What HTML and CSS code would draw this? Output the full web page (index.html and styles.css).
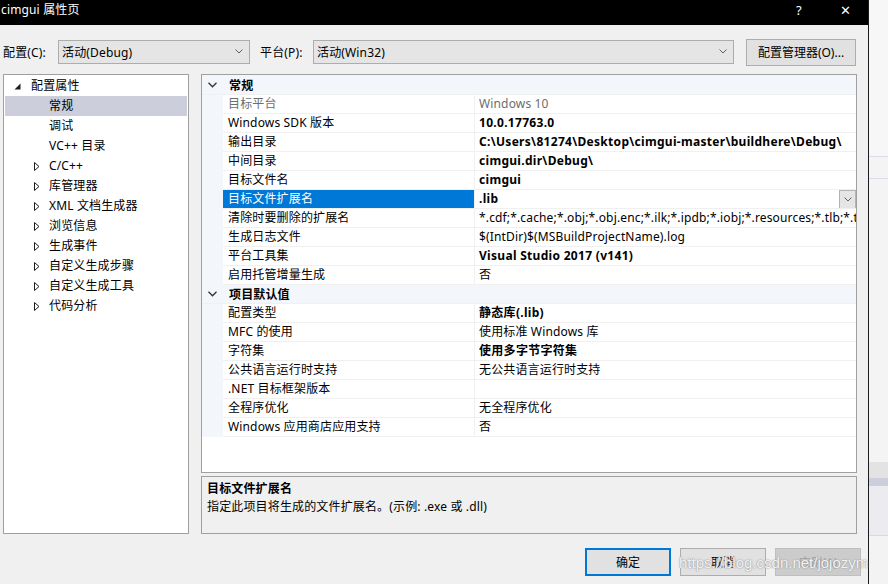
FILE: index.html
```html
<!DOCTYPE html>
<html lang="zh-CN">
<head>
<meta charset="UTF-8" />
<title>cimgui 属性页</title>
<link rel="stylesheet" href="styles.css">
</head>
<body>
<div class="dialog">
  <div class="titlebar">
    <span class="title">cimgui 属性页</span>
    <span class="help">?</span>
    <span class="close">✕</span>
  </div>

  <div class="toolbar">
    <span class="label">配置(C):</span>
    <div class="combo combo-config">
      <span>活动(Debug)</span>
      <svg class="chev" width="8" height="5" viewBox="0 0 8 5"><path d="M0.5 0.5 L4 4 L7.5 0.5" fill="none" stroke="#606060" stroke-width="1"/></svg>
    </div>
    <span class="label label-platform">平台(P):</span>
    <div class="combo combo-platform">
      <span>活动(Win32)</span>
      <svg class="chev" width="8" height="5" viewBox="0 0 8 5"><path d="M0.5 0.5 L4 4 L7.5 0.5" fill="none" stroke="#606060" stroke-width="1"/></svg>
    </div>
    <button class="btn btn-manager">配置管理器(O)...</button>
  </div>

  <div class="main">
    <div class="tree">
      <div class="node root">
        <svg class="twisty" width="7" height="7" viewBox="0 0 7 7"><path d="M6.5 0.5 L6.5 6.5 L0.5 6.5 Z" fill="#1e1e1e"/></svg>
        <span>配置属性</span>
      </div>
      <div class="node leaf selected"><span>常规</span></div>
      <div class="node leaf"><span>调试</span></div>
      <div class="node leaf"><span>VC++ 目录</span></div>
      <div class="node branch"><svg class="twisty" width="6" height="9" viewBox="0 0 6 9"><path d="M0.5 0.5 L5 4.5 L0.5 8.5 Z" fill="none" stroke="#1e1e1e"/></svg><span>C/C++</span></div>
      <div class="node branch"><svg class="twisty" width="6" height="9" viewBox="0 0 6 9"><path d="M0.5 0.5 L5 4.5 L0.5 8.5 Z" fill="none" stroke="#1e1e1e"/></svg><span>库管理器</span></div>
      <div class="node branch"><svg class="twisty" width="6" height="9" viewBox="0 0 6 9"><path d="M0.5 0.5 L5 4.5 L0.5 8.5 Z" fill="none" stroke="#1e1e1e"/></svg><span>XML 文档生成器</span></div>
      <div class="node branch"><svg class="twisty" width="6" height="9" viewBox="0 0 6 9"><path d="M0.5 0.5 L5 4.5 L0.5 8.5 Z" fill="none" stroke="#1e1e1e"/></svg><span>浏览信息</span></div>
      <div class="node branch"><svg class="twisty" width="6" height="9" viewBox="0 0 6 9"><path d="M0.5 0.5 L5 4.5 L0.5 8.5 Z" fill="none" stroke="#1e1e1e"/></svg><span>生成事件</span></div>
      <div class="node branch"><svg class="twisty" width="6" height="9" viewBox="0 0 6 9"><path d="M0.5 0.5 L5 4.5 L0.5 8.5 Z" fill="none" stroke="#1e1e1e"/></svg><span>自定义生成步骤</span></div>
      <div class="node branch"><svg class="twisty" width="6" height="9" viewBox="0 0 6 9"><path d="M0.5 0.5 L5 4.5 L0.5 8.5 Z" fill="none" stroke="#1e1e1e"/></svg><span>自定义生成工具</span></div>
      <div class="node branch"><svg class="twisty" width="6" height="9" viewBox="0 0 6 9"><path d="M0.5 0.5 L5 4.5 L0.5 8.5 Z" fill="none" stroke="#1e1e1e"/></svg><span>代码分析</span></div>
    </div>

    <div class="side">
      <div class="grid">
        <div class="cat first">
          <svg class="cat-chev" width="9" height="6" viewBox="0 0 9 6"><path d="M0.5 0.8 L4.5 4.8 L8.5 0.8" fill="none" stroke="#333" stroke-width="1.3"/></svg>
          <span>常规</span>
        </div>
        <div class="row dim"><div class="gut"></div><div class="name">目标平台</div><div class="val">Windows 10</div></div>
        <div class="row"><div class="gut"></div><div class="name">Windows SDK 版本</div><div class="val b">10.0.17763.0</div></div>
        <div class="row"><div class="gut"></div><div class="name">输出目录</div><div class="val b">C:\Users\81274\Desktop\cimgui-master\buildhere\Debug\</div></div>
        <div class="row"><div class="gut"></div><div class="name">中间目录</div><div class="val b">cimgui.dir\Debug\</div></div>
        <div class="row"><div class="gut"></div><div class="name">目标文件名</div><div class="val b">cimgui</div></div>
        <div class="row active"><div class="gut"></div><div class="name">目标文件扩展名</div><div class="val b"><span class="txt">.lib</span><span class="drop"><svg width="8" height="5" viewBox="0 0 8 5"><path d="M0.5 0.5 L4 4 L7.5 0.5" fill="none" stroke="#606060"/></svg></span></div></div>
        <div class="row"><div class="gut"></div><div class="name">清除时要删除的扩展名</div><div class="val">*.cdf;*.cache;*.obj;*.obj.enc;*.ilk;*.ipdb;*.iobj;*.resources;*.tlb;*.tli;*.tlh;*.tmp;*.rsp</div></div>
        <div class="row"><div class="gut"></div><div class="name">生成日志文件</div><div class="val">$(IntDir)$(MSBuildProjectName).log</div></div>
        <div class="row"><div class="gut"></div><div class="name">平台工具集</div><div class="val b">Visual Studio 2017 (v141)</div></div>
        <div class="row"><div class="gut"></div><div class="name">启用托管增量生成</div><div class="val">否</div></div>
        <div class="cat">
          <svg class="cat-chev" width="9" height="6" viewBox="0 0 9 6"><path d="M0.5 0.8 L4.5 4.8 L8.5 0.8" fill="none" stroke="#333" stroke-width="1.3"/></svg>
          <span>项目默认值</span>
        </div>
        <div class="row"><div class="gut"></div><div class="name">配置类型</div><div class="val b">静态库(.lib)</div></div>
        <div class="row"><div class="gut"></div><div class="name">MFC 的使用</div><div class="val">使用标准 Windows 库</div></div>
        <div class="row"><div class="gut"></div><div class="name">字符集</div><div class="val b">使用多字节字符集</div></div>
        <div class="row"><div class="gut"></div><div class="name">公共语言运行时支持</div><div class="val">无公共语言运行时支持</div></div>
        <div class="row"><div class="gut"></div><div class="name">.NET 目标框架版本</div><div class="val"></div></div>
        <div class="row"><div class="gut"></div><div class="name">全程序优化</div><div class="val">无全程序优化</div></div>
        <div class="row"><div class="gut"></div><div class="name">Windows 应用商店应用支持</div><div class="val">否</div></div>
      </div>

      <div class="desc">
        <div class="desc-title">目标文件扩展名</div>
        <div class="desc-text">指定此项目将生成的文件扩展名。(示例: .exe 或 .dll)</div>
      </div>
    </div>
  </div>

  <div class="actions">
    <button class="btn btn-ok">确定</button>
    <button class="btn">取消</button>
    <button class="btn btn-disabled">应用(A)</button>
  </div>
</div>
<div class="backdrop"></div>
<div class="watermark">https://blog.csdn.net/jojozym</div>
</body>
</html>
```

FILE: styles.css
```css
:root {
  --dialog-bg: #f0f0f0;
  --border: #a0a0a0;
  --combo-bg: #e5e5e5;
  --accent: #0078d7;
  --line: #f0f0f0;
  --cat-bg: #f3f6fb;
}
body {
  margin: 0;
  width: 888px;
  height: 584px;
  overflow: hidden;
  display: flex;
  position: relative;
  font-family: "Noto Sans", "Noto Sans CJK SC", sans-serif;
  font-size: 12px;
  letter-spacing: 0.15px;
  color: #000;
  background: #f4f4f4;
}
.dialog {
  width: 868px;
  height: 584px;
  flex: none;
  display: flex;
  flex-direction: column;
  background: var(--dialog-bg);
  border-right: 1px solid #1c1c1c;
}
.backdrop {
  flex: 1;
  background: linear-gradient(#f7f7f7 0 156px, #dcdce8 156px 157px, #f4f4f4 157px 178px, #dcdce8 178px 179px, #f4f4f4 179px 462px, #e3e3e3 462px 478px, #cdcedb 478px 486px, #ebebf0 486px 535px, #dadada 535px 536px, #f3f3f3 536px);
}

/* title bar */
.titlebar {
  height: 25px;
  background: #000;
  color: #fff;
  display: flex;
  align-items: flex-start;
  line-height: 20px;
}
.title {
  flex: 1;
  padding-left: 1px;
}
.help {
  width: 44px;
  font-size: 13px;
}
.close {
  width: 28px;
  font-size: 13px;
}

/* top row */
.toolbar {
  display: flex;
  align-items: center;
  height: 27px;
  margin-top: 13px;
  padding-left: 3px;
}
.label {
  width: 55px;
}
.label-platform {
  margin-left: 10px;
  width: 53px;
}
.combo {
  height: 22px;
  border: 1px solid #adadad;
  background: var(--combo-bg);
  display: flex;
  align-items: center;
  justify-content: space-between;
  padding: 0 6px 0 3px;
}
.combo-config { width: 181px; }
.combo-platform { width: 410px; }
.btn {
  font-family: inherit;
  font-size: 12px;
  color: #000;
  background: #e1e1e1;
  border: 1px solid #adadad;
  padding: 0;
  height: 28px;
  width: 86px;
}
.btn-manager {
  margin-left: 12px;
  width: 110px;
  height: 27px;
  margin-top: 1px;
}

/* main */
.main {
  display: flex;
  gap: 12px;
  margin: 9px 0 0 3px;
  height: 460px;
}
.tree {
  width: 184px;
  border: 1px solid var(--border);
  background: #fff;
  padding-top: 1px;
}
.node {
  height: 20px;
  display: flex;
  align-items: center;
  margin: 0 1px;
}
.node span { line-height: 20px; }
.root { padding-left: 9px; }
.root .twisty { margin-right: 10px; }
.leaf { padding-left: 44px; }
.branch { padding-left: 29px; }
.branch .twisty { margin-right: 9px; }
.selected { background: #cccedb; }

.side {
  width: 656px;
  display: flex;
  flex-direction: column;
  gap: 3px;
}
.grid {
  height: 397px;
  border: 1px solid var(--border);
  background: #fff;
  overflow: hidden;
}
.cat {
  height: 19px;
  background: var(--cat-bg);
  display: flex;
  align-items: center;
  font-weight: bold;
  border-bottom: 1px solid var(--line);
  box-sizing: border-box;
}
.cat.first { height: 20px; }
.cat-chev { margin: 0 12px 0 6px; }
.row {
  height: 19px;
  display: grid;
  grid-template-columns: 21px 252px 1fr;
}
.gut { background: var(--cat-bg); }
.name, .val {
  border-bottom: 1px solid var(--line);
  padding-left: 5px;
  line-height: 18px;
  white-space: nowrap;
  overflow: hidden;
}
.name { border-right: 1px solid var(--line); }
.val { padding-left: 4px; }
.b { font-weight: bold; letter-spacing: 0.3px; }
.dim .name, .dim .val { color: #6d6d6d; }
.active .name {
  background: var(--accent);
  color: #fff;
}
.active .val {
  display: flex;
  justify-content: space-between;
}
.drop {
  width: 15px;
  height: 17px;
  border: 1px solid #b4b4b4;
  background: var(--combo-bg);
  display: flex;
  align-items: center;
  justify-content: center;
}

.desc {
  height: 58px;
  border: 1px solid var(--border);
  padding: 3px 5px;
  box-sizing: border-box;
}
.desc-title { font-weight: bold; line-height: 18px; }
.desc-text { line-height: 18px; }

/* buttons */
.actions {
  display: flex;
  justify-content: flex-end;
  gap: 9px;
  margin-top: 14px;
  padding-right: 7px;
}
.btn-ok {
  border: 2px solid var(--accent);
}
.btn-disabled {
  background: #cccccc;
  border-color: #bfbfbf;
  color: #a0a0a0;
}

.watermark {
  position: absolute;
  left: 679px;
  top: 554px;
  font-family: "Liberation Sans", sans-serif;
  font-size: 15px;
  letter-spacing: 0;
  color: rgba(255, 255, 255, 0.9);
  text-shadow: 0 0 1px #8a8a8a, 0 0 2px #a8a8a8;
}
```
